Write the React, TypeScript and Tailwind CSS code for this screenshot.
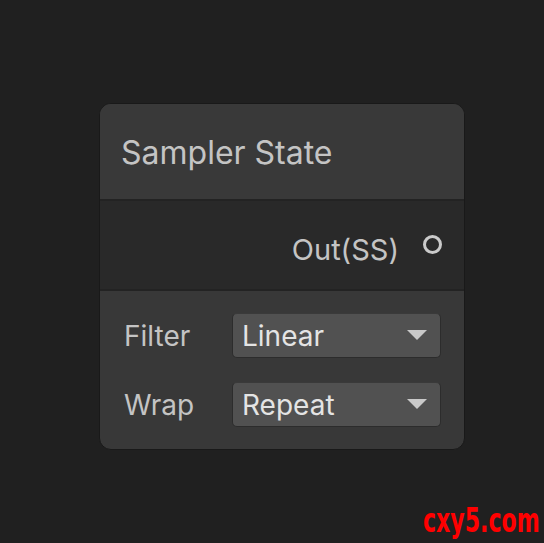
import { useState } from "react";

const options = [
  { label: "Filter", value: "Linear" },
  { label: "Wrap", value: "Repeat" },
];

function Dropdown({ value }: { value: string }) {
  return (
    <div className="flex h-[45px] w-[209px] items-center justify-between rounded-[5px] border border-[#2c2c2c] border-t-[#3a3a3a] bg-[#515151] pl-[9px] pr-[13px]">
      <span className="text-[28px] leading-none text-[#e4e4e4]">{value}</span>
      <svg width="20" height="11" viewBox="0 0 20 11">
        <path d="M0 0 H20 L10 10 Z" fill="#c9c9c9" />
      </svg>
    </div>
  );
}

export default function App() {
  const [settings] = useState(options);

  return (
    <div
      className="relative min-h-[543px] bg-[#202020] pl-[99px] pt-[103px]"
      style={{ fontFamily: "Inter, 'Noto Sans', sans-serif" }}
    >
      {/* Node */}
      <div className="w-[366px] overflow-hidden rounded-[12px] border border-[#191919] bg-[#383838]">
        <div className="flex h-[95px] items-center pl-[21px] pt-[2px] bg-[#393939]">
          <span className="text-[32px] text-[#c4c4c4]">Sampler State</span>
        </div>
        <div className="h-[2px] bg-[#232323]" />
        <div className="flex h-[88px] items-start justify-end gap-[24px] bg-[#292929] pr-[22px] pt-[33px]">
          <span className="text-[29px] leading-[32px] text-[#c4c4c4]">Out(SS)</span>
          <div className="mt-[1px] h-[19px] w-[19px] rounded-full border-[3px] border-[#cacaca] bg-[#2a2a2a]" />
        </div>
        <div className="h-[2px] bg-[#232323]" />
        <div className="flex flex-col gap-[24px] pb-[22px] pl-[24px] pt-[22px]">
          {settings.map((s) => (
            <div key={s.label} className="flex items-center">
              <span className="w-[108px] text-[28px] text-[#c4c4c4]">{s.label}</span>
              <Dropdown value={s.value} />
            </div>
          ))}
        </div>
      </div>

      {/* watermark */}
      <div
        className="absolute bottom-[6px] right-[4px] origin-right scale-x-[0.65] text-[34px] font-bold leading-none text-[#ff0000]"
        style={{ fontFamily: "'DejaVu Sans', sans-serif" }}
      >
        cxy5.com
      </div>
    </div>
  );
}
